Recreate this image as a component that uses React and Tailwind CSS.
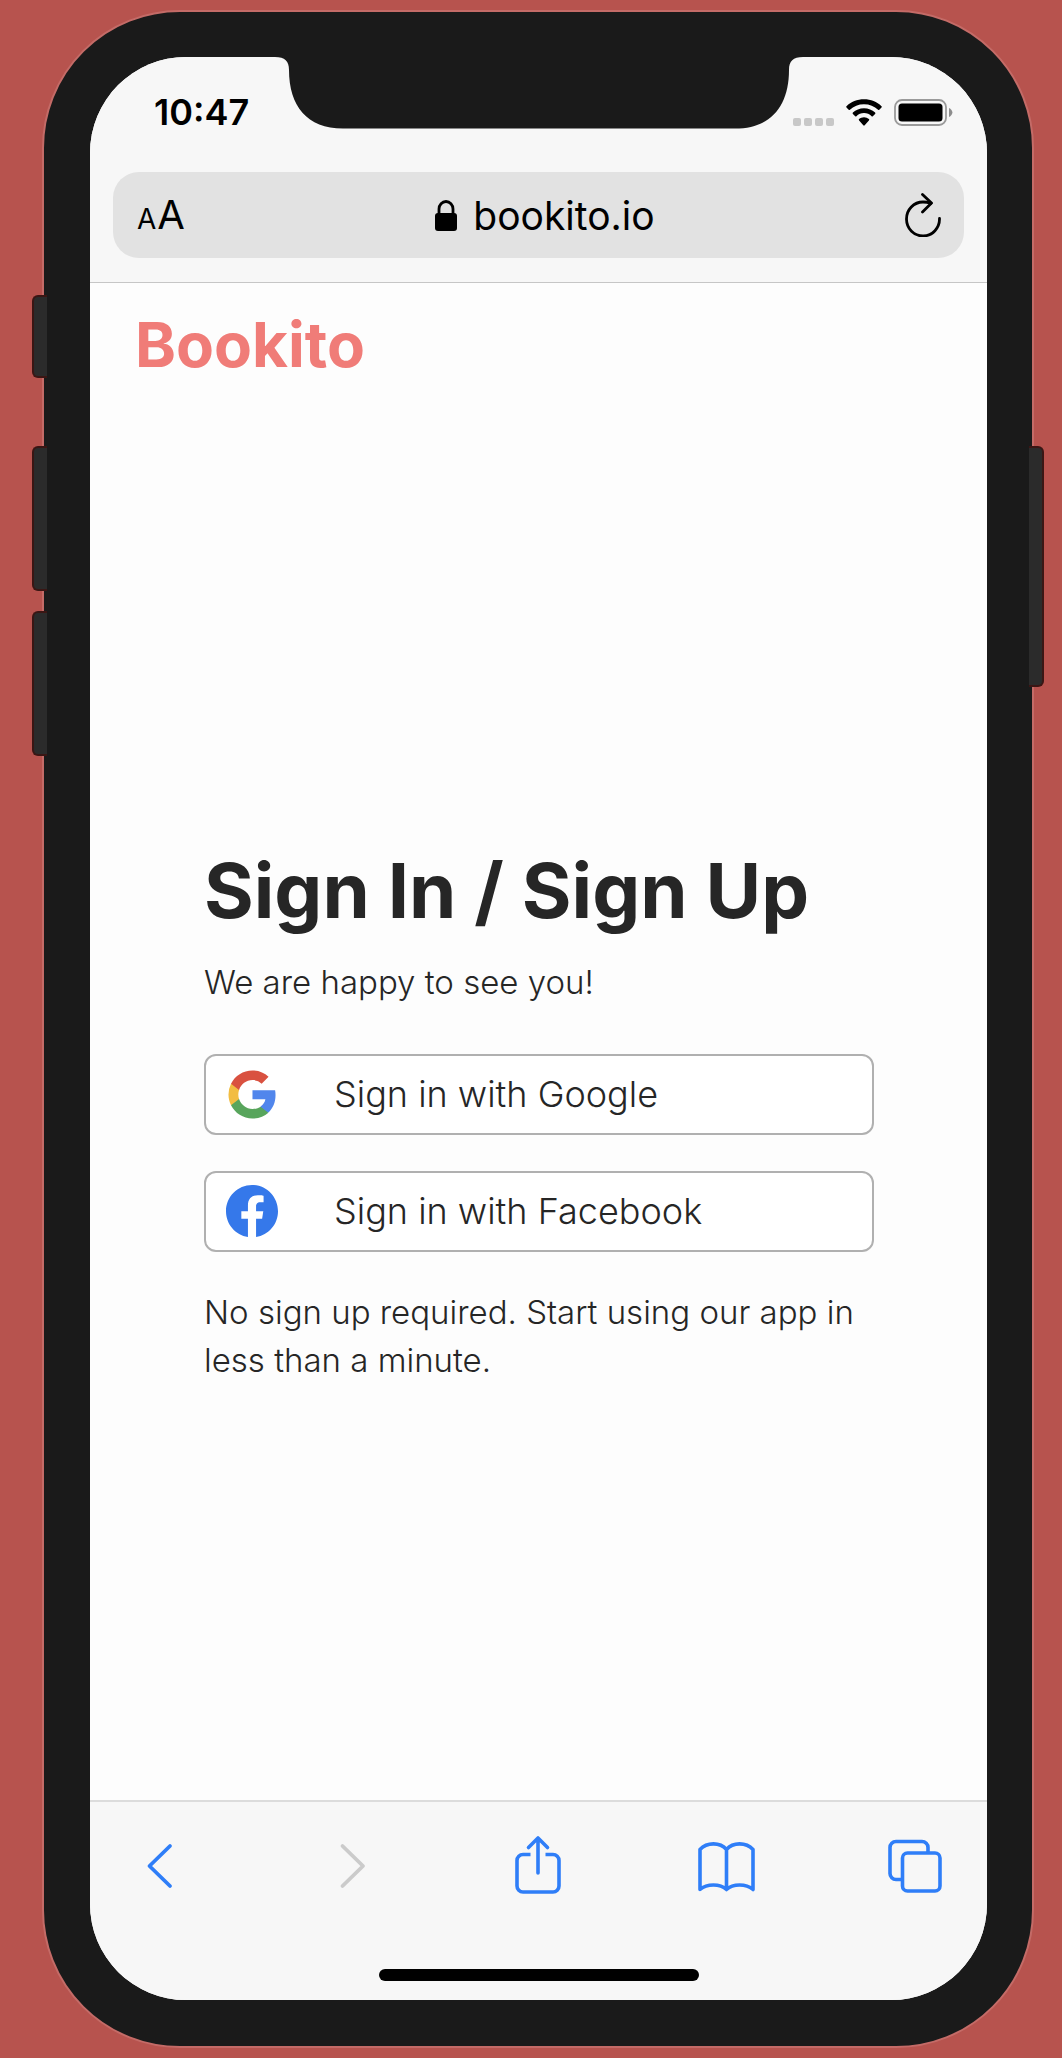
import React from "react";

function SideButton({ className }) {
  return (
    <div aria-hidden="true" className={`absolute w-[15px] border-2 border-[#3a1614] bg-[#2b2b2b] ${className}`} />
  );
}

function Notch() {
  return (
    <svg
      aria-hidden="true"
      className="absolute left-1/2 top-[-1px] h-[73px] w-[528px] -translate-x-1/2"
      viewBox="0 0 528 73"
      fill="#1a1a1a"
    >
      <path d="M0 0H528V1C518 1 514 5 514 14C514 50 496 72.500 460 72.500H68C32 72.500 14 50 14 14C14 5 10 1 0 1Z" />
    </svg>
  );
}

function StatusBar() {
  return (
    <div className="flex h-[110px] items-center justify-between pl-[64px] pr-[34px]">
      <span className="text-4xl font-semibold text-black">10:47</span>
      <div className="flex items-end gap-3">
        <div className="flex gap-[3px]" aria-hidden="true">
          <i className="size-2 rounded-[2px] bg-[#c8c8c8]" />
          <i className="size-2 rounded-[2px] bg-[#c8c8c8]" />
          <i className="size-2 rounded-[2px] bg-[#c8c8c8]" />
          <i className="size-2 rounded-[2px] bg-[#c8c8c8]" />
        </div>
        <svg className="h-[27px] w-[36px]" viewBox="0 0 36 27" role="img" aria-label="Wi-Fi">
          <path d="M18 0.300C11.200 0.300 5 2.900 0.500 7.200a.9.900 0 0 0 0 1.300L2.700 10.700a.9.900 0 0 0 1.200 0C7.600 7.200 12.500 5.200 18 5.200s10.400 2 14.100 5.500a.9.900 0 0 0 1.200 0l2.200-2.200a.9.900 0 0 0 0-1.300C31 2.900 24.800 .3 18 .3Z" />
          <path d="M18 9.200c-4.300 0-8.200 1.700-11.100 4.400a.9.900 0 0 0 0 1.300l2.300 2.300a.9.900 0 0 0 1.200 0C12.400 15.300 15.100 14.100 18 14.100s5.600 1.200 7.600 3.100a.9.900 0 0 0 1.200 0l2.300-2.300a.9.900 0 0 0 0-1.300C26.200 10.900 22.300 9.200 18 9.200Z" />
          <path d="M18 18.200c-1.900 0-3.600.7-4.900 1.800a.9.900 0 0 0 0 1.400l4.200 4.900a1 1 0 0 0 1.400 0l4.200-4.900a.9.900 0 0 0 0-1.400A7.400 7.400 0 0 0 18 18.200Z" />
        </svg>
        <svg className="h-[27px] w-[59px]" viewBox="0 0 59 27" role="img" aria-label="Battery full">
          <rect x="1" y="1" width="51" height="25" rx="7" fill="none" stroke="#9a9a9a" strokeWidth="1.800" />
          <rect x="4.500" y="4.500" width="44" height="18" rx="3.500" />
          <path d="M55 9v9c2-1 3.400-2.600 3.400-4.500S57 10 55 9Z" fill="#8d8d8d" />
        </svg>
      </div>
    </div>
  );
}

function AddressBar() {
  return (
    <div className="mx-[23px] mt-[5px] mb-6 flex h-[86px] items-center justify-between rounded-[26px] bg-[#e2e2e2] pl-6 pr-[23px] text-black">
      <button type="button" aria-label="Text size" className="flex items-baseline gap-px leading-none">
        <span className="text-[28px]">A</span>
        <span className="text-[40px]">A</span>
      </button>
      <div className="flex items-center gap-4">
        <svg className="h-[31px] w-[22px]" viewBox="0 0 22 31" aria-hidden="true">
          <path d="M4 15V9a7 7.500 0 0 1 14 0v6" fill="none" stroke="#000" strokeWidth="2.800" />
          <rect y="13" width="22" height="18" rx="3" />
        </svg>
        <span className="text-[39px] leading-none">bookito.io</span>
      </div>
      <button type="button" aria-label="Reload">
        <svg className="h-[44px] w-[36px]" viewBox="0 0 36 44" fill="none" stroke="#000" strokeWidth="2.800" strokeLinecap="round" strokeLinejoin="round">
          <path d="M34.500 25.500A16.500 17 0 1 1 18 9q4 0 8 1.300" />
          <path d="M17.500 1.500 26.500 10 17.500 19" />
        </svg>
      </button>
    </div>
  );
}

function GoogleLogo() {
  return (
    <svg className="h-[49px] w-[48px]" viewBox="0 0 48 48" aria-hidden="true">
      <path fill="#5186ec" d="M47.530 24.550c0-1.660-.15-3.260-.43-4.790H24.480v9.060h12.920c-.56 3-2.250 5.550-4.790 7.250v6.030h7.760c4.540-4.180 7.160-10.330 7.160-17.550z" />
      <path fill="#58a55c" d="M24.480 48c6.480 0 11.910-2.150 15.880-5.810l-7.760-6.030c-2.150 1.440-4.900 2.290-8.120 2.290-6.250 0-11.540-4.220-13.430-9.890H3.030v6.220C6.980 42.620 15.090 48 24.480 48z" />
      <path fill="#f2bd42" d="M11.050 28.560A14.420 14.420 0 0 1 10.300 24c0-1.580.27-3.120.75-4.560v-6.220H3.030A23.990 23.990 0 0 0 .48 24c0 3.870.93 7.540 2.550 10.780l8.020-6.220z" />
      <path fill="#d95140" d="M24.480 9.550c3.520 0 6.690 1.210 9.180 3.590l6.890-6.890C36.380 2.370 30.950 0 24.480 0 15.090 0 6.980 5.380 3.030 13.220l8.020 6.220c1.890-5.670 7.180-9.890 13.430-9.890z" />
    </svg>
  );
}

function FacebookLogo() {
  return (
    <svg className="size-[52px]" viewBox="0 0 24 24" aria-hidden="true">
      <path fill="#3578ea" d="M24 12.073C24 5.405 18.627 0 12 0S0 5.405 0 12.073C0 18.099 4.388 23.094 10.125 24v-8.437H7.078v-3.490h3.047v-2.660c0-3.025 1.792-4.697 4.533-4.697 1.312 0 2.686.236 2.686.236v2.971h-1.513c-1.491 0-1.956.93-1.956 1.886v2.264h3.328l-.532 3.490h-2.796V24C19.612 23.094 24 18.099 24 12.073z" />
    </svg>
  );
}

function ProviderButton({ logo, children }) {
  return (
    <button
      type="button"
      className="flex h-[81px] w-full items-center rounded-xl border-2 border-[#b0b0b0] bg-white pl-5 text-[36px] font-light text-[#262626]"
    >
      <span className="mr-[56px] flex w-[52px] justify-center">{logo}</span>
      {children}
    </button>
  );
}

function Toolbar() {
  return (
    <footer className="flex flex-col items-center border-t-2 border-[#dcdcdc] bg-[#f7f7f7] pt-[33px] pb-[19px]">
      <nav aria-label="Browser" className="flex w-full items-center justify-between pl-[40px] pr-[42px] text-[#2f7ef8]">
        <button type="button" aria-label="Back" className="flex w-[60px] justify-center">
          <svg className="h-[60px] w-[28px]" viewBox="0 0 28 60" fill="none" stroke="currentColor" strokeWidth="3.800" strokeLinecap="round" strokeLinejoin="round">
            <path d="M24 11 3.500 31 24 51" />
          </svg>
        </button>
        <button type="button" aria-label="Forward" disabled className="flex w-[60px] justify-center text-[#cbcbcb]">
          <svg className="h-[60px] w-[34px]" viewBox="0 0 34 60" fill="none" stroke="currentColor" strokeWidth="3.800" strokeLinecap="round" strokeLinejoin="round">
            <path d="M10.500 11 31 31 10.500 51" />
          </svg>
        </button>
        <button type="button" aria-label="Share" className="flex w-[60px] justify-center">
          <svg className="h-[60px] w-[46px]" viewBox="0 0 46 60" fill="none" stroke="currentColor" strokeWidth="3.600" strokeLinecap="round" strokeLinejoin="round">
            <path strokeLinecap="butt" d="M15.500 19.500H8a6 6 0 0 0-6 6V51a6 6 0 0 0 6 6H38a6 6 0 0 0 6-6V25.500a6 6 0 0 0-6-6H30.500" />
            <path d="M23 38V3.500M13.500 12.500 23 3 32.500 12.500" />
          </svg>
        </button>
        <button type="button" aria-label="Bookmarks" className="flex w-[60px] justify-center">
          <svg className="h-[60px] w-[57px]" viewBox="0 0 57 60" fill="none" stroke="currentColor" strokeWidth="3.600" strokeLinecap="round" strokeLinejoin="round">
            <path d="M28.500 14.500C22 7 9 7 2 14.500V54.500C9 48.500 22 48.500 28.500 54.500C35 48.500 48 48.500 55 54.500V14.500C48 7 35 7 28.500 14.500ZM28.500 14.500V54.500" />
          </svg>
        </button>
        <button type="button" aria-label="Tabs" className="flex w-[60px] justify-center">
          <svg className="h-[60px] w-[54px]" viewBox="0 0 54 60" fill="none" stroke="currentColor" strokeWidth="3.600">
            <rect x="14.500" y="18" width="37.500" height="38" rx="5" />
            <path d="M14.500 44.500H8a6 6 0 0 1-6-6V12.500a6 6 0 0 1 6-6H34a6 6 0 0 1 6 6V18" />
          </svg>
        </button>
      </nav>
      <div className="mt-[74px] h-3 w-[320px] rounded-full bg-black" />
    </footer>
  );
}

export default function App() {
  return (
    <div className="relative flex min-h-screen flex-col bg-[#b7534e] pt-[10px] pr-[28px] pb-[10px] pl-[42px] font-['Inter','Liberation_Sans',sans-serif]">
      <div className="flex grow flex-col rounded-[138px] border-2 border-[#c46b67] bg-[#1a1a1a] pt-[45px] pr-[45px] pb-[46px] pl-[46px]">
        <div className="relative flex grow flex-col overflow-hidden rounded-[96px] bg-[#fdfdfd]">
          <Notch />
          <div className="border-b border-[#c6c6c6] bg-[#f7f7f7]">
            <StatusBar />
            <AddressBar />
          </div>
          <main className="flex grow flex-col text-[#262626]">
            <header className="px-[45px] pt-[26px]">
              <a href="#home" className="text-[62px] leading-[72px] font-bold text-[#f07c78]">Bookito</a>
            </header>
            <section className="flex grow flex-col justify-center pt-12 pr-[113px] pl-[114px]">
              <h1 className="text-[76px] leading-[88px] font-bold whitespace-nowrap">Sign In / Sign Up</h1>
              <p className="mt-6 text-[33px] leading-[48px] font-light">We are happy to see you!</p>
              <div className="mt-12 flex flex-col gap-9">
                <ProviderButton logo={<GoogleLogo />}>Sign in with Google</ProviderButton>
                <ProviderButton logo={<FacebookLogo />}>Sign in with Facebook</ProviderButton>
              </div>
              <p className="mt-9 text-[33px] leading-[48px] font-light">No sign up required. Start using our app in less than a minute.</p>
            </section>
          </main>
          <Toolbar />
        </div>
      </div>
      <SideButton className="left-[32px] top-[295px] h-[83px] rounded-l-md border-r-0" />
      <SideButton className="left-[32px] top-[446px] h-[145px] rounded-l-md border-r-0" />
      <SideButton className="left-[32px] top-[611px] h-[145px] rounded-l-md border-r-0" />
      <SideButton className="right-[18px] top-[446px] h-[241px] rounded-r-md border-l-0" />
    </div>
  );
}
